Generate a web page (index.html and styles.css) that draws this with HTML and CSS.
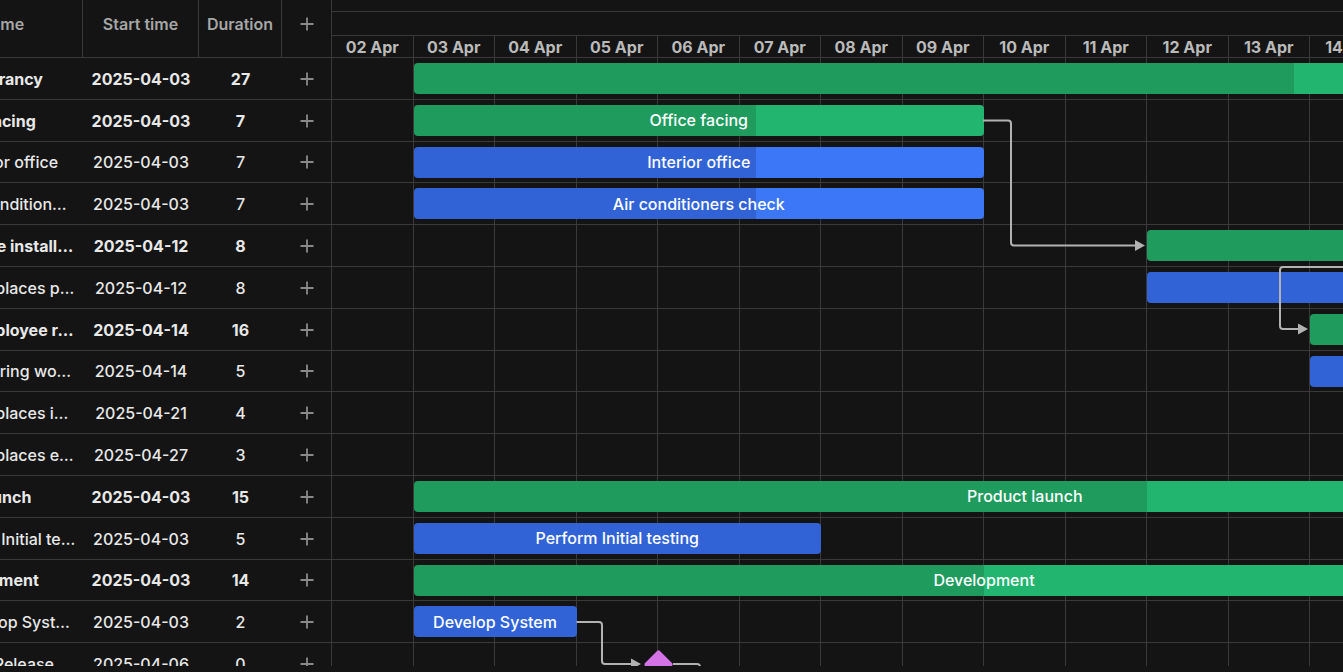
FILE: index.html
```html
<!DOCTYPE html>
<html lang="en">

<head>
    <meta charset="UTF-8">
    <meta name="viewport" content="width=device-width, initial-scale=1.0">
    <title>Gantt</title>
    <link rel="stylesheet" href="styles.css">
</head>

<body>
    <div class="gantt">
        <div class="grid">
            <div class="grid-inner">
                <div class="grid-header">
                    <div class="cell col-name">Task name</div>
                    <div class="cell col-start">Start time</div>
                    <div class="cell col-duration">Duration</div>
                    <div class="cell col-add" id="headerAdd"></div>
                </div>
                <div class="grid-body" id="gridBody"></div>
            </div>
        </div>
        <div class="chart">
            <div class="scale">
                <div class="scale-row scale-top"></div>
                <div class="scale-row scale-month"></div>
                <div class="scale-row scale-days" id="scaleDays"></div>
            </div>
            <div class="chart-body">
                <div class="day-columns" id="dayColumns"></div>
                <div class="bar-rows" id="barRows"></div>
                <svg class="links" width="1100" height="640" viewBox="0 0 1100 640">
                    <path d="M651 62.5 H676 Q679 62.5 679 65.5 V184.5 Q679 187.5 682 187.5 H804" />
                    <polygon points="803,182 813,187.5 803,193" />
                    <path d="M1030 209 H951 Q948 209 948 212 V268 Q948 271 951 271 H967" />
                    <polygon points="966,265.5 976,271 966,276.5" />
                    <path d="M244.5 564 H267 Q270 564 270 567 V603 Q270 606 273 606 H300" />
                    <polygon points="299,600.5 309,606 299,611.5" />
                    <path d="M341 606 H365 Q368 606 368 609 V660" />
                </svg>
            </div>
        </div>
    </div>

    <script>
        const DAY_WIDTH = 81.5;
        const FIRST_DAY = Date.parse('2025-04-02');

        const tasks = [
            { text: 'Office itinerancy', start: '2025-04-03', duration: 27, level: 0, type: 'summary', progress: 40 },
            { text: 'Office facing', start: '2025-04-03', duration: 7, level: 1, type: 'summary', progress: 60 },
            { text: 'Interior office', start: '2025-04-03', duration: 7, level: 2, type: 'task', progress: 60 },
            { text: 'Air conditioners check', start: '2025-04-03', duration: 7, level: 2, type: 'task', progress: 60 },
            { text: 'Furniture installation', start: '2025-04-12', duration: 8, level: 1, type: 'summary', progress: 50 },
            { text: 'Workplaces preparation', start: '2025-04-12', duration: 8, level: 2, type: 'task', progress: 50 },
            { text: 'Employee relocation', start: '2025-04-14', duration: 16, level: 3, type: 'summary', progress: 30 },
            { text: 'Preparing workplaces', start: '2025-04-14', duration: 5, level: 2, type: 'task', progress: 50 },
            { text: 'Workplaces importation', start: '2025-04-21', duration: 4, level: 2, type: 'task', progress: 0 },
            { text: 'Workplaces exportation', start: '2025-04-27', duration: 3, level: 2, type: 'task', progress: 0 },
            { text: 'Product launch', start: '2025-04-03', duration: 15, level: 0, type: 'summary', progress: 60 },
            { text: 'Perform Initial testing', start: '2025-04-03', duration: 5, level: 1, type: 'task', progress: 100 },
            { text: 'Development', start: '2025-04-03', duration: 14, level: 1, type: 'summary', progress: 50 },
            { text: 'Develop System', start: '2025-04-03', duration: 2, level: 2, type: 'task', progress: 100 },
            { text: 'Beta Release', start: '2025-04-06', duration: 0, level: 2, type: 'milestone', progress: 0 }
        ];

        const plusIcon = '<svg width="16" height="16" viewBox="0 0 16 16"><path d="M8 1.5v13M1.5 8h13" /></svg>';

        function dayOffset(date) {
            return (Date.parse(date) - FIRST_DAY) / 86400000;
        }

        function renderScale() {
            const scaleDays = document.getElementById('scaleDays');
            const dayColumns = document.getElementById('dayColumns');

            for (let i = 0; i < 14; i++) {
                const label = String(2 + i).padStart(2, '0') + ' Apr';
                scaleDays.insertAdjacentHTML('beforeend', `<div class="day">${label}</div>`);
                dayColumns.insertAdjacentHTML('beforeend', '<div class="day-column"></div>');
            }
        }

        function renderGrid() {
            const gridBody = document.getElementById('gridBody');
            document.getElementById('headerAdd').innerHTML = plusIcon;

            tasks.forEach(task => {
                const row = document.createElement('div');
                row.className = 'grid-row' + (task.type === 'summary' ? ' summary' : '');
                row.innerHTML = `
                    <div class="cell col-name level-${task.level}"><span>${task.text}</span></div>
                    <div class="cell col-start">${task.start}</div>
                    <div class="cell col-duration">${task.duration}</div>
                    <div class="cell col-add">${plusIcon}</div>`;
                gridBody.appendChild(row);
            });
        }

        function renderBars() {
            const barRows = document.getElementById('barRows');

            tasks.forEach(task => {
                const row = document.createElement('div');
                row.className = 'bar-row';
                const left = dayOffset(task.start) * DAY_WIDTH;

                if (task.type === 'milestone') {
                    row.innerHTML = `<div class="milestone" style="margin-left: ${left - 10.5}px"></div>`;
                } else {
                    const bar = document.createElement('div');
                    bar.className = 'bar bar-' + task.type;
                    bar.style.marginLeft = left + 'px';
                    bar.style.width = task.duration * DAY_WIDTH + 'px';
                    bar.style.setProperty('--progress', task.progress + '%');
                    bar.textContent = task.text;
                    row.appendChild(bar);
                }
                barRows.appendChild(row);
            });
        }

        renderScale();
        renderGrid();
        renderBars();
    </script>
</body>

</html>
```

FILE: styles.css
```css
:root {
    --line: #3a3a3a;
    --row-height: 41.8px;
}

body {
    font-family: Inter, 'Noto Sans', sans-serif;
    font-size: 16px;
    margin: 0;
    padding: 0;
    background-color: #141414;
    color: #e8e8e8;
    overflow: hidden;
}

.gantt {
    display: flex;
    height: 666px;
    overflow: hidden;
}

/* left grid */
.grid {
    flex: 0 0 331px;
    overflow: hidden;
}

.grid-inner {
    width: 448px;
    margin-left: -117px;
}

.cell {
    display: flex;
    align-items: center;
    justify-content: center;
    box-sizing: border-box;
    white-space: nowrap;
    overflow: hidden;
    flex: none;
}

.col-name {
    width: 200px;
}

.col-start {
    width: 116px;
}

.col-duration {
    width: 83px;
}

.col-add {
    width: 49px;
    color: #8a8a8a;
}

.col-add svg path {
    stroke: currentColor;
    stroke-width: 1.8;
    fill: none;
}

.grid-header {
    display: flex;
    height: 58px;
    box-sizing: border-box;
    border-bottom: 1px solid var(--line);
    color: #a6a6a6;
    font-weight: 600;
}

.grid-header .cell {
    padding-bottom: 10px;
    border-right: 1px solid var(--line);
}

.grid-header .col-add {
    border-right: none;
}

.grid-row {
    display: flex;
    height: var(--row-height);
    box-sizing: border-box;
    border-bottom: 1px solid var(--line);
    padding-top: 1px;
    font-weight: 500;
}

.grid-row.summary {
    font-weight: 700;
}

.grid-row .col-name {
    justify-content: flex-start;
    padding-right: 7px;
}

.grid-row .col-name span {
    overflow: hidden;
    text-overflow: ellipsis;
}

.level-0 {
    padding-left: 30px;
}

.level-1 {
    padding-left: 52px;
}

.level-2 {
    padding-left: 72px;
}

.level-3 {
    padding-left: 88px;
}

/* timeline */
.chart {
    flex: 1;
    min-width: 0;
    display: flex;
    flex-direction: column;
    border-left: 1px solid var(--line);
    overflow: hidden;
}

.scale-row {
    box-sizing: border-box;
    border-bottom: 1px solid var(--line);
}

.scale-top {
    height: 12px;
}

.scale-month {
    height: 24px;
}

.scale-days {
    display: flex;
    height: 22px;
}

.day {
    flex: 0 0 81.5px;
    box-sizing: border-box;
    border-right: 1px solid var(--line);
    display: flex;
    align-items: center;
    justify-content: center;
    color: #bababa;
    font-weight: 700;
    white-space: nowrap;
}

.chart-body {
    flex: 1;
    display: grid;
    overflow: hidden;
}

.day-columns,
.bar-rows,
.links {
    grid-area: 1 / 1;
}

.day-columns {
    display: flex;
}

.day-column {
    flex: 0 0 81.5px;
    box-sizing: border-box;
    border-right: 1px solid var(--line);
}

.bar-row {
    height: var(--row-height);
    box-sizing: border-box;
    border-bottom: 1px solid var(--line);
    padding-top: 5px;
}

.bar {
    height: 31px;
    border-radius: 4px;
    display: flex;
    align-items: center;
    justify-content: center;
    color: #fff;
    font-weight: 500;
    white-space: nowrap;
    overflow: hidden;
}

.bar-summary {
    background: linear-gradient(to right, #1f9b5e var(--progress), #21b570 var(--progress));
}

.bar-task {
    background: linear-gradient(to right, #3163d6 var(--progress), #3b77f6 var(--progress));
}

.milestone {
    width: 21px;
    height: 21px;
    margin-top: 5.5px;
    border-radius: 2px;
    background-color: #d472e8;
    transform: rotate(45deg);
}

.links {
    pointer-events: none;
}

.links path {
    fill: none;
    stroke: #b2b2b2;
    stroke-width: 2;
}

.links polygon {
    fill: #b2b2b2;
}
```
